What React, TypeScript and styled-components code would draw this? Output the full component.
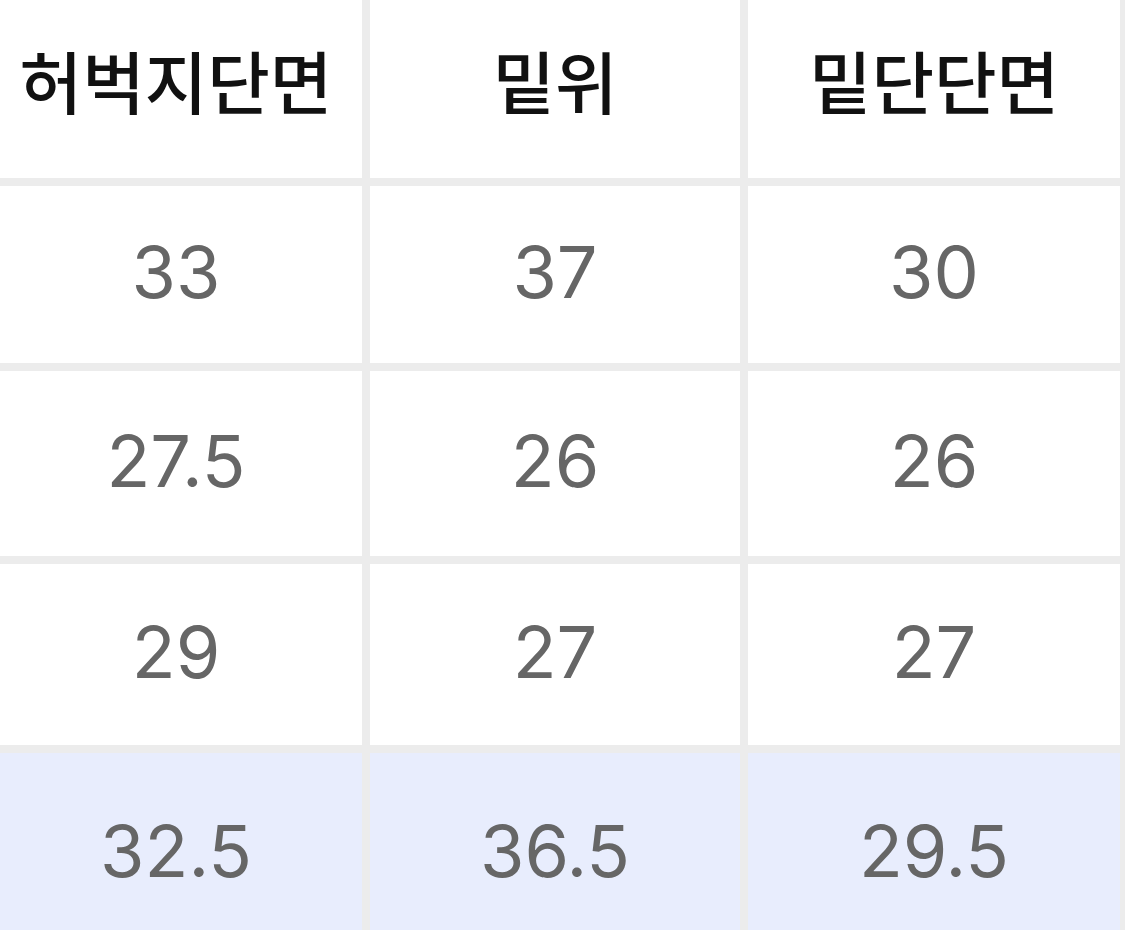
import * as React from 'react';
import styled, { createGlobalStyle } from 'styled-components';

const GlobalStyle = createGlobalStyle`
  html, body {
    margin: 0;
    padding: 0;
    background: #ffffff;
    overflow: hidden;
  }
`

const Page = styled.div`
  width: 1125px;
  height: 930px;
  overflow: hidden;
  background: #ffffff;
`

const Table = styled.div`
  display: grid;
  grid-template-columns: 372px 370px 372px;
  grid-template-rows: 178px 177px 185px 181px 200px;
  gap: 8px;
  width: 1130px;
  margin-left: -10px;
  padding-right: 5px;
  background: #ececec;
`

const Cell = styled.div<{ $head?: boolean; $highlight?: boolean }>`
  display: flex;
  align-items: center;
  justify-content: center;
  background: ${p => (p.$highlight ? '#e8edfd' : '#ffffff')};
  color: ${p => (p.$head ? '#111111' : '#666666')};
  font-family: ${p => (p.$head
    ? '"Noto Sans CJK KR", "Noto Sans", sans-serif'
    : 'Inter, "Noto Sans CJK KR", sans-serif')};
  font-size: ${p => (p.$head ? '68px' : '72px')};
  font-weight: ${p => (p.$head ? 500 : 400)};
  padding-bottom: ${p => (p.$head ? '20px' : '6px')};
`

const headers = ['허벅지단면', '밑위', '밑단단면']

const rows = [
  ['33', '37', '30'],
  ['27.5', '26', '26'],
  ['29', '27', '27'],
  ['32.5', '36.5', '29.5']
]

export default function App() {
  return (
    <Page>
      <GlobalStyle />
      <Table>
        {headers.map(h => (
          <Cell key={h} $head>{h}</Cell>
        ))}
        {rows.map((row, i) =>
          row.map((v, j) => (
            <Cell key={`${i}-${j}`} $highlight={i === rows.length - 1}>{v}</Cell>
          ))
        )}
      </Table>
    </Page>
  )
}
